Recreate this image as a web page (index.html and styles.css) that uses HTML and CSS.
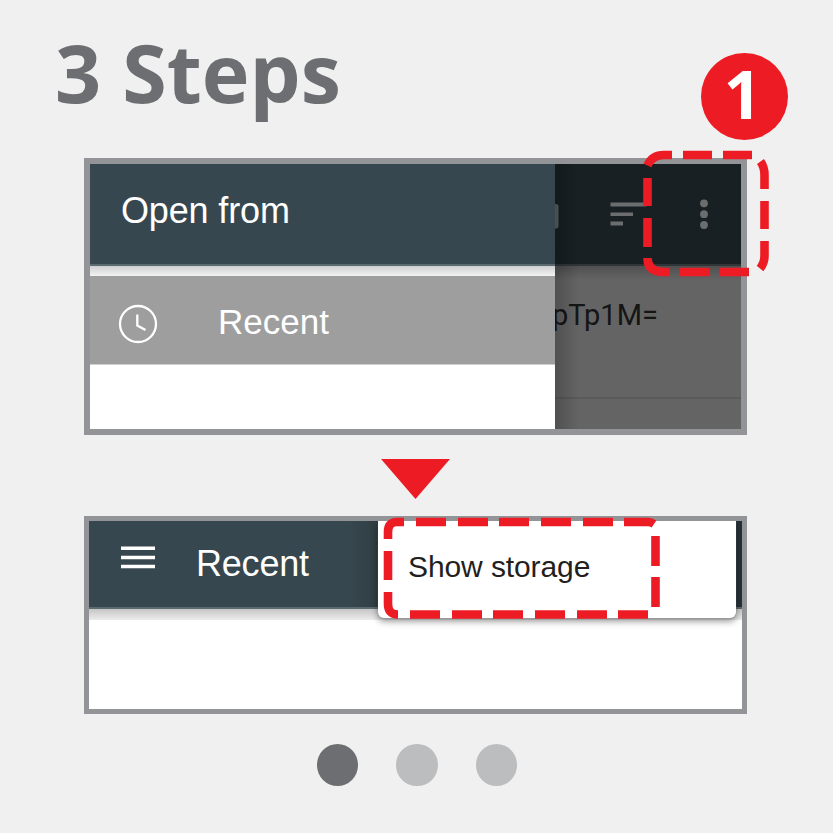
FILE: index.html
```html
<!DOCTYPE html>
<html lang="en">
<head>
<meta charset="utf-8">
<title>3 Steps</title>
<link rel="stylesheet" href="styles.css">
</head>
<body>
<main class="page">
  <header class="top">
    <h1 class="title">3 Steps</h1>
    <div class="badge"><span>1</span></div>
  </header>

  <section class="panel panel-drawer">
    <div class="drawer">
      <div class="drawer-head"><span class="label">Open from</span></div>
      <div class="drawer-shadow"></div>
      <div class="drawer-item">
        <svg class="clock" viewBox="0 0 40 40"><circle cx="20" cy="20" r="18"/><path d="M19.3 10.5V21.5L27.5 26"/></svg>
        <span class="label">Recent</span>
      </div>
    </div>
    <div class="behind">
      <div class="behind-bar">
        <svg viewBox="0 0 187 102">
          <path d="M0 40.500H1.500Q3 40.500 3 42V62.500Q3 64 1.500 64H0" fill="#5c6062" stroke="#5c6062"/>
          <g fill="#6b6d6e"><rect x="55.500" y="38.500" width="36" height="4"/><rect x="55.500" y="48.500" width="22.500" height="3.500"/><rect x="55.500" y="57.500" width="12.500" height="4"/>
          <circle cx="149" cy="39.300" r="3.900"/><circle cx="149" cy="50.200" r="3.900"/><circle cx="149" cy="61" r="3.900"/></g>
        </svg>
      </div>
      <div class="behind-row"><span>pTp1M=</span></div>
      <div class="scrim-edge"></div>
    </div>
    <svg class="marker marker-menu" viewBox="640 148 132 132">
      <path d="M647.500 165.500Q652 155 664 155H672M683 155H712M723 155H752M760.500 161.500Q764.500 167 764.500 175V189M764.500 201V229M764.500 241V256Q764.500 263 760 268.500M749 272H720M709 272H680M669 272H662Q647.500 271 647.500 258M647.500 247V218M647.500 206V178"/>
    </svg>
  </section>

  <div class="arrow"></div>

  <section class="panel panel-menu">
    <div class="bar">
      <svg class="burger" viewBox="0 0 36 26"><path d="M1 3.200H35M1 12.500H35M1 21.500H35"/></svg>
      <span class="label">Recent</span>
    </div>
    <div class="bar-shadow"></div>
    <div class="menu"><span>Show storage</span></div>
    <svg class="marker marker-storage" viewBox="380 514 284 109">
      <path d="M388 539V532Q388 522 397 522H404M416 522H446M458 522H488M499 522H529M541 522H571M583 522H613M624 522H648Q651 522 654 524M655.500 536V566M655.500 577V607M648 614.500H618M607 614.500H577M565 614.500H535M523 614.500H493M482 614.500H452M440 614.500H410M398 614.500Q388 614.500 388 604V592M388 580V551"/>
    </svg>
  </section>

  <nav class="dots"><i class="on"></i><i></i><i></i></nav>
</main>
</body>
</html>
```
FILE: styles.css
```css
* { box-sizing: border-box; }
body { margin: 0; background: #f0f0f0; font-family: "Liberation Sans", Arial, sans-serif; }
.page { width: 833px; height: 833px; overflow: hidden; display: flex; flex-direction: column; }
.top { height: 158px; flex: none; display: flex; justify-content: space-between; padding: 0 45px 0 55px; }
.title { margin: 17px 0 0; font: bold 81px/110px "Open Sans", "Noto Sans", sans-serif; color: #6d6e71; white-space: nowrap; transform-origin: 0 50%; transform: scaleX(.998); }
.badge { width: 87px; height: 87px; margin-top: 53px; padding-right: 4px; border-radius: 50%; background: #ed1c24; color: #fff; display: flex; justify-content: center; font: bold 66px/80px "Open Sans", sans-serif; }
.panel { position: relative; flex: none; width: 663px; margin-left: 84px; border: 6px solid #929497; background: #fff; }
.panel-drawer { height: 277px; display: flex; }
.drawer { width: 465px; flex: none; color: #fff; font-size: 36px; }
.drawer-head { height: 102px; padding: 26px 0 0 31px; line-height: 41px; letter-spacing: -.15px; background: #37474f; border-bottom: 2px solid #5b6970; }
.drawer-shadow { height: 10px; background: linear-gradient(#cfcfcf, #f3f3f3); }
.drawer-item { height: 89px; display: flex; align-items: center; padding-left: 28px; background: #9e9e9e; border-bottom: 1px solid #cfcfcf; font-size: 35px; line-height: 41px; }
.drawer-item .label { margin: 2px 0 0 60px; }
.clock { width: 40px; height: 40px; margin-top: 7px; fill: none; stroke: #fff; stroke-width: 2.3; }
.behind { position: relative; flex: 1; background: #646464; overflow: hidden; }
.behind-bar { height: 102px; background: #182023; border-bottom: 2px solid #303638; }
.behind-bar svg { display: block; width: 187px; height: 102px; }
.behind-row { height: 133px; border-bottom: 2px solid #5a5a5a; background: linear-gradient(#505050, #646464 14px); color: #151515; font: 29px/36px Roboto, sans-serif; padding-top: 31px; }
.behind-row span { display: block; margin-left: -3px; white-space: nowrap; }
.scrim-edge { position: absolute; left: 0; top: 0; width: 24px; height: 100%; background: linear-gradient(90deg, rgba(0,0,0,.2), rgba(0,0,0,0)); }
.marker { position: absolute; fill: none; stroke: #ed1c24; stroke-width: 8.6; }
.marker-menu { left: 550px; top: -16px; width: 132px; height: 132px; }
.marker-storage { left: 290.500px; top: -7px; width: 284px; height: 109px; }
.arrow { flex: none; width: 69px; height: 40px; margin: 24px 0 17px 381px; background: #ed1c24; clip-path: polygon(0 0, 100% 0, 50% 100%); }
.panel-menu { height: 198px; border-width: 5px; }
.bar { height: 88px; display: flex; padding-left: 31px; background: linear-gradient(90deg, #37474f 260px, #303d43 289px, #37474f 290px, #263237 640px); border-bottom: 2px solid #5b6970; color: #fff; font-size: 36px; line-height: 41px; letter-spacing: -.2px; }
.burger { width: 36px; height: 26px; margin-top: 24px; fill: none; stroke: #fff; stroke-width: 3.600; }
.bar .label { margin: 22px 0 0 40px; }
.bar-shadow { height: 11px; background: linear-gradient(#c6c5c6, #ececec); }
.menu { position: absolute; left: 289px; top: 0; width: 358px; height: 97px; padding: 29px 0 0 30px; background: #fff; border-radius: 0 0 6px 6px; box-shadow: 0 1px 1px #999, 0 3px 7px rgba(0,0,0,.45); clip-path: inset(0 -12px -16px -12px); color: #231f20; font-size: 30px; line-height: 34px; letter-spacing: -.1px; white-space: nowrap; }
.dots { display: flex; gap: 38px; margin: 30px 0 0 316.500px; }
.dots i { width: 41.500px; height: 41.500px; border-radius: 50%; background: #bbbdbf; }
.dots .on { background: #6d6e71; }
```
